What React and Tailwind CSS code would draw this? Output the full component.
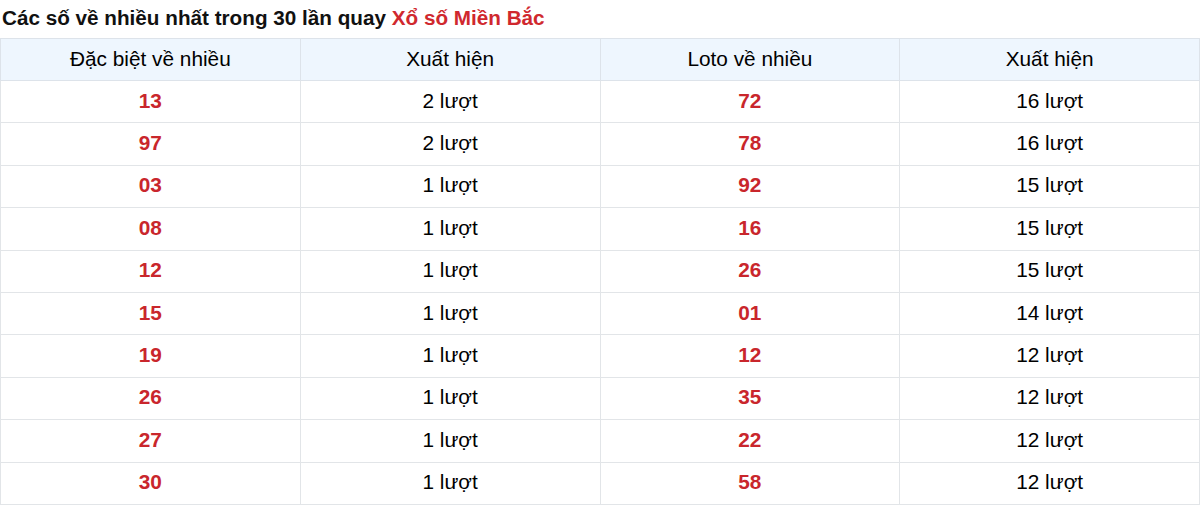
const rows = [
  ['13', '2 lượt', '72', '16 lượt'],
  ['97', '2 lượt', '78', '16 lượt'],
  ['03', '1 lượt', '92', '15 lượt'],
  ['08', '1 lượt', '16', '15 lượt'],
  ['12', '1 lượt', '26', '15 lượt'],
  ['15', '1 lượt', '01', '14 lượt'],
  ['19', '1 lượt', '12', '12 lượt'],
  ['26', '1 lượt', '35', '12 lượt'],
  ['27', '1 lượt', '22', '12 lượt'],
  ['30', '1 lượt', '58', '12 lượt'],
];

export default function App() {
  return (
    <div className="w-[1200px] h-[506px] bg-white font-['Liberation_Sans',Arial,sans-serif] text-black">
      <h2 className="pl-[2px] pt-[6px] h-[38px] text-[20.7px] leading-[24px] font-bold text-[#111]">
        Các số về nhiều nhất trong 30 lần quay <span className="text-[#d0282e]">Xổ số Miền Bắc</span>
      </h2>
      <table className="w-full border-collapse table-fixed text-[20.8px] leading-[24px] text-center">
        <thead>
          <tr className="h-[42px] bg-[#eef6fe]">
            {['Đặc biệt về nhiều', 'Xuất hiện', 'Loto về nhiều', 'Xuất hiện'].map((h, i) => (
              <th key={i} className="border border-[#dde3ea] font-normal pb-[2px]">{h}</th>
            ))}
          </tr>
        </thead>
        <tbody>
          {rows.map((r, i) => (
            <tr key={i} className="h-[42.4px]">
              <td className="border border-[#e2e5e8] font-bold text-[#c9262c] pb-[2px]">{r[0]}</td>
              <td className="border border-[#e2e5e8] pb-[2px]">{r[1]}</td>
              <td className="border border-[#e2e5e8] font-bold text-[#c9262c] pb-[2px]">{r[2]}</td>
              <td className="border border-[#e2e5e8] pb-[2px]">{r[3]}</td>
            </tr>
          ))}
        </tbody>
      </table>
    </div>
  );
}
